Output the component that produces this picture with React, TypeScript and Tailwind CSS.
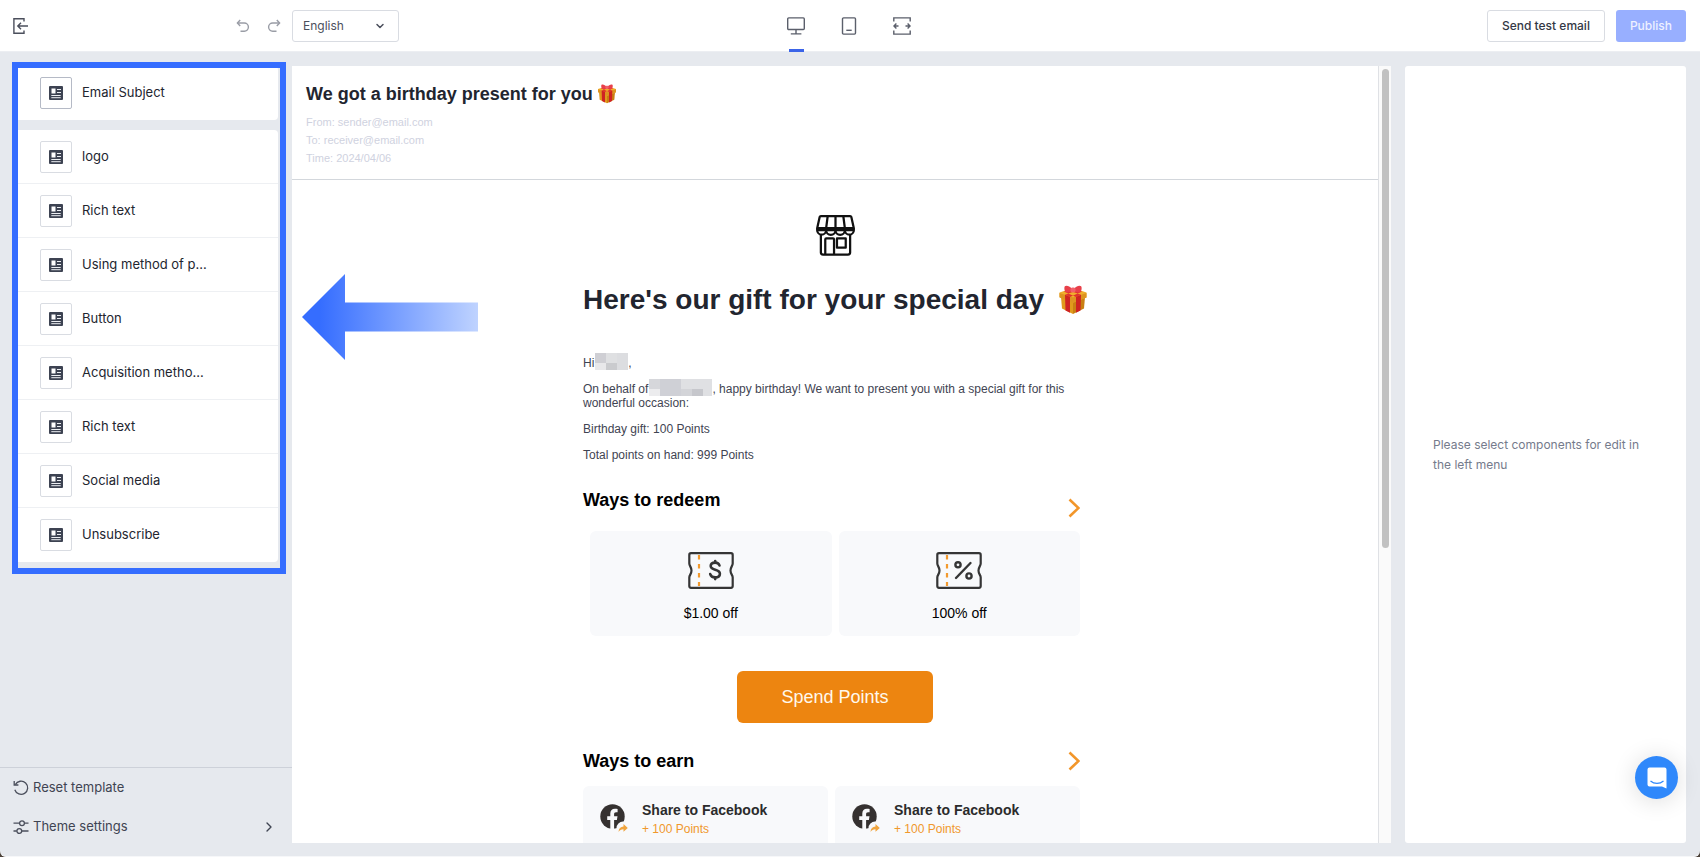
import React, { useState } from "react";
import { ChevronDown, ChevronRight } from "lucide-react";

const components = [
  "logo",
  "Rich text",
  "Using method of p...",
  "Button",
  "Acquisition metho...",
  "Rich text",
  "Social media",
  "Unsubscribe",
];

const BlockIcon = () => (
  <svg width="14" height="14" viewBox="0 0 14 14" fill="none" className="shrink-0">
    <rect width="14" height="14" rx="1" fill="#3d4352" />
    <rect x="2.5" y="2.5" width="4" height="5" fill="#fff" />
    <path d="M8 3.5h4M8 6.5h4M2.3 9.5h9.4M2.3 11.7h9.4" stroke="#eceef2" strokeWidth="1" />
  </svg>
);

const ExitIcon = () => (
  <svg width="16" height="16" viewBox="0 0 16 16" fill="none" stroke="#4b4f5c" strokeWidth="1.4">
    <path d="M11 3.5V.7H.9v14.6H11v-2.8" />
    <path d="M15 8H5M8 4.8 4.8 8 8 11.2" />
  </svg>
);

const UndoIcon = () => (
  <svg width="14" height="14" viewBox="0 0 14 14" fill="none" stroke="#9a9da6" strokeWidth="1.4">
    <path d="M1.5 4h6.8a4 4 0 0 1 0 8.2H4.5" />
    <path d="M4.2 1 1.4 4l2.8 3" />
  </svg>
);

const DesktopIcon = () => (
  <svg width="18" height="18" viewBox="0 0 18 18" fill="none" stroke="#5b5f6b" strokeWidth="1.4">
    <rect x=".7" y=".9" width="16.6" height="11.6" rx="1" />
    <path d="M9 12.5v4M3.8 16.9h10.6" />
  </svg>
);

const TabletIcon = () => (
  <svg width="18" height="18" viewBox="0 0 18 18" fill="none" stroke="#5b5f6b" strokeWidth="1.4">
    <rect x="2.5" y=".9" width="13" height="16.2" rx="1" />
    <path d="M6.3 13.3h5.4" />
  </svg>
);

const FullWidthIcon = () => (
  <svg width="18" height="18" viewBox="0 0 18 18" fill="none" stroke="#5b5f6b" strokeWidth="1.4">
    <path d="M.8 4.4V.9h16.4v3.5M.8 13.6v3.5h16.4v-3.5" />
    <path d="M5.5 9H1M3.4 6.6 1 9l2.4 2.4M12.5 9H17M14.6 6.6 17 9l-2.4 2.4" />
  </svg>
);

const ResetIcon = () => (
  <svg width="16" height="16" viewBox="0 0 16 16" fill="none" stroke="#4b4f5c" strokeWidth="1.3">
    <path d="M2.3 4.6a6.6 6.6 0 1 1-.5 5.2" />
    <path d="M1.2 1v4h4.2" />
  </svg>
);

const SlidersIcon = () => (
  <svg width="16" height="16" viewBox="0 0 16 16" fill="none" stroke="#4b4f5c" strokeWidth="1.3">
    <path d="M.5 4.2h6M11.5 4.2h4M.5 12h3.3M8.8 12h6.7" />
    <circle cx="9" cy="4.2" r="2.4" />
    <circle cx="6.3" cy="12" r="2.4" />
  </svg>
);

const StoreIcon = () => (
  <svg width="39" height="41" viewBox="0 0 40 42" fill="none" stroke="#111" strokeWidth="2.3" strokeLinejoin="round">
    <path d="M5 1.2h30q1 0 1.3 1L38.8 13.5H1.2L3.7 2.2Q4 1.2 5 1.2z" />
    <path d="M12 1l-1.6 12.5M20 1v12.5M28 1l1.6 12.5" />
    <path d="M1.2 13.5v2a4.6 4.6 0 0 0 9.2 0v-2M10.4 13.5v2a4.8 4.8 0 0 0 9.6 0v-2M20 13.5v2a4.8 4.8 0 0 0 9.6 0v-2M29.6 13.5v2a4.6 4.6 0 0 0 9.2 0v-2M1.2 15.6h37.6" />
    <path d="M5 20v18.5q0 2 2 2h26q2 0 2-2V20M9.5 40V25q0-1 1-1h7q1 0 1 1v15" />
    <rect x="21.5" y="24" width="9" height="9.5" />
  </svg>
);

const GiftIcon = ({ className }: { className: string }) => (
  <svg className={className} viewBox="0 0 28 30" role="img" aria-label="gift">
    <path d="M2 12l12 5v12L3 23.5z" fill="#e09a1c" />
    <path d="M26 12l-12 5v12l11-5.5z" fill="#c97f12" />
    <path d="M.5 7.5L14 3l13.5 4.5v5L14 17.5.5 12z" fill="#f0ae2c" />
    <path d="M.5 8v4.5L14 18v-5.5zM27.5 8v4.5L14 18v-5.5z" fill="#dd9420" />
    <path d="M6 9.8l5 2v16l-4.500-2.300zM22 9.800l-5 2v16l4.500-2.300z" fill="#cf2322" />
    <path d="M6 9.8L19 5l4 1.5L11 12zM22 9.8L9 5 5 6.5 17 12z" fill="#e0322c" />
    <path d="M14 5C11 .5 7 0 5.800 1.200c-1 1.600-.3 4.800 1 6C9 7.800 12 7 14 6zM14 5c3-4.500 7-5 8.200-3.800 1 1.600.3 4.800-1 6C19 7.800 16 7 14 6z" fill="#e8404a" />
    <rect x="11.5" y="2.5" width="5" height="5" rx="2" fill="#f2606a" />
  </svg>
);

const DollarMark = () => (
  <g stroke="#353535" strokeWidth="2.6" fill="none" strokeLinecap="round">
    <path d="M31.5 13.5c-.6-2-2.2-2.9-4.4-2.9-2.7 0-4.4 1.3-4.4 3.5 0 4.8 9.2 2.6 9.2 7.6 0 2.3-1.9 3.7-4.7 3.7-2.6 0-4.4-1.2-5-3.3" />
    <path d="M27.2 9v1.3M27.2 25.8v1.3" />
  </g>
);

const PercentMark = () => (
  <g stroke="#353535" strokeWidth="2.4" fill="none" strokeLinecap="round">
    <path d="M34.5 11L20 26" />
    <circle cx="22" cy="12.8" r="2.6" />
    <circle cx="33" cy="24" r="2.6" />
  </g>
);

const Ticket = ({ children }: { children: React.ReactNode }) => (
  <svg width="46" height="37" viewBox="0 0 46 37" fill="none">
    <path
      d="M3 1.2h40q1.7 0 1.7 1.7v8.6c0 2.5-2.2 3.5-2.2 7s2.2 4.5 2.2 7v8.6q0 1.7-1.7 1.7H3q-1.7 0-1.7-1.7v-8.6c0-2.5 2.2-3.5 2.2-7s-2.2-4.5-2.2-7V2.9Q1.3 1.2 3 1.2z"
      stroke="#353535"
      strokeWidth="2.2"
    />
    <path d="M11 3v31" stroke="#f39a2d" strokeWidth="2.2" strokeDasharray="4.5 4.5" />
    {children}
  </svg>
);

const FacebookShare = () => (
  <svg width="28" height="29" viewBox="0 0 28 29" fill="none">
    <circle cx="12.5" cy="12.5" r="12.2" fill="#353130" />
    <path d="M10.3 25v-9H7.2v-3.7h3.1V9.6c0-3.1 1.8-4.8 4.6-4.8.9 0 1.9.1 2.7.3v3.1h-1.5c-1.5 0-2 .9-2 1.900v2.200h3.400l-.6 3.700h-2.800v9z" fill="#f8f9fb" />
    <circle cx="23" cy="24" r="6.5" fill="#f8f9fb" />
    <path d="M18.5 28c.3-3.5 2-5.2 5-5.4V20l4.3 4-4.3 3.8v-2.5c-2.3 0-3.8.9-5 2.7z" fill="#f0a53f" />
  </svg>
);

// Pixelated stand-ins for personal data
const NameMask = () => (
  <svg className="-mt-[6px] -mb-[2px] ml-px inline-block align-middle" width="33" height="17" viewBox="0 0 32 18" preserveAspectRatio="none" shapeRendering="crispEdges">
    <rect width="32" height="18" fill="#dcdde0" />
    <path d="M0 0h11v11H0z" fill="#cfcfd4" />
    <path d="M11 0h10v11H11z" fill="#dfe0e2" />
    <path d="M0 11h11v7H0z" fill="#e8e8ea" />
    <path d="M11 11h10v7H11z" fill="#cacbce" />
  </svg>
);

const StoreMask = () => (
  <svg className="-mt-[6px] -mb-[2px] ml-px inline-block align-middle" width="63" height="17" viewBox="0 0 63 18" preserveAspectRatio="none" shapeRendering="crispEdges">
    <rect width="63" height="18" fill="#dfe0e3" />
    <path d="M0 0h11v11H0z" fill="#d6d7db" />
    <path d="M11 0h21v18H11z" fill="#cfd0d6" />
    <path d="M0 11h11v7H0z" fill="#ececee" />
    <path d="M32 11h11v7H32z" fill="#d3d4d8" />
    <path d="M43 11h11v7H43z" fill="#c6c7cc" />
  </svg>
);

const SectionArrow = () => (
  <svg width="12" height="20" viewBox="0 0 12 20" fill="none" stroke="#f2962a" strokeWidth="2.6">
    <path d="M1.5 1.5L10.500 10l-9 8.500" />
  </svg>
);

const ComponentRow = ({ label, active }: { label: string; active?: boolean }) => (
  <button className="flex h-[54px] w-full items-center gap-[10px] pl-[26px] text-left text-[#22252f]">
    <span className={`flex h-8 w-8 items-center justify-center rounded-xs border ${active ? "border-[#b5bac6]" : "border-[#d9dce2]"}`}>
      <BlockIcon />
    </span>
    {label}
  </button>
);

const Header = () => {
  const [language, setLanguage] = useState("English");

  return (
    <header className="grid h-[52px] shrink-0 grid-cols-3 items-center border-b border-[#eceef2] bg-white pl-[13px] pr-[14px] text-xs">
      <div className="flex items-center">
        <button aria-label="Exit" className="mr-[207px]"><ExitIcon /></button>
        <button aria-label="Undo" className="mr-[17px]"><UndoIcon /></button>
        <button aria-label="Redo" className="mr-[11px] -scale-x-100"><UndoIcon /></button>
        <label className="relative">
          <select
            aria-label="Language"
            value={language}
            onChange={(e) => setLanguage(e.target.value)}
            className="h-8 w-[107px] appearance-none rounded-[3px] border border-[#d9dce2] bg-white pl-[10px] text-[#4b4f5c]"
          >
            <option>English</option>
          </select>
          <ChevronDown size={12} strokeWidth={3} className="pointer-events-none absolute right-[13px] top-[10px] text-[#4b4f5c]" />
        </label>
      </div>
      <div className="flex h-full justify-center gap-[35px]">
        <button aria-label="Desktop" className="flex h-[52px] flex-col items-center justify-between pt-[17px]">
          <DesktopIcon />
          <span className="h-[3px] w-[15px] bg-[#3b64e8]" />
        </button>
        <button aria-label="Tablet"><TabletIcon /></button>
        <button aria-label="Full width"><FullWidthIcon /></button>
      </div>
      <div className="flex justify-end gap-[11px] font-medium">
        <button className="h-8 rounded-[3px] border border-[#d9dce2] px-[14px] text-[#343845]">Send test email</button>
        <button className="h-8 rounded-[3px] bg-[#98afff] px-[14px] text-[#eef1ff]">Publish</button>
      </div>
    </header>
  );
};

const Sidebar = () => (
  <aside className="flex w-[292px] shrink-0 flex-col justify-between">
    <div className="relative mx-[14px] mt-[14px]">
      <div className="rounded bg-white">
        <ComponentRow label="Email Subject" active />
      </div>
      <div className="mt-[10px] divide-y divide-[#eef0f3] rounded bg-white">
        {components.map((label, i) => (
          <ComponentRow key={i} label={label} />
        ))}
      </div>
      <div className="pointer-events-none absolute -bottom-3 -left-[2px] -right-2 -top-1 border-6 border-[#356dff]" />
    </div>
    <div className="border-t border-[#cdd1d9] pb-[10px] pl-[13px] pr-[15px] text-[#3f4452]">
      <button className="flex h-[39px] items-center gap-1">
        <ResetIcon />
        Reset template
      </button>
      <button className="flex h-[39px] w-full items-center gap-1">
        <SlidersIcon />
        Theme settings
        <ChevronRight size={16} className="ml-auto" />
      </button>
    </div>
  </aside>
);

const RedeemCard = ({ label, children }: { label: string; children: React.ReactNode }) => (
  <div className="flex h-[105px] flex-1 flex-col items-center rounded-md bg-[#f8f9fb] pt-[21px] text-sm text-black">
    <Ticket>{children}</Ticket>
    <span className="mt-[14px]">{label}</span>
  </div>
);

const EarnCard = () => (
  <div className="flex h-24 flex-1 gap-[14px] rounded-md bg-[#f8f9fb] pl-[17px] pt-[18px]">
    <FacebookShare />
    <div className="-mt-1">
      <p className="text-sm leading-5 font-bold text-[#2b2b2b]">Share to Facebook</p>
      <p className="text-xs leading-[18px] text-[#f0982c]">+ 100 Points</p>
    </div>
  </div>
);

const EmailPreview = () => (
  <main className="mb-[13px] mt-[14px] flex min-w-0 flex-1 overflow-hidden bg-white font-['Liberation_Sans',Arial,sans-serif]">
    <div className="flex-1 overflow-hidden">
      <div className="border-b border-[#d3d7dc] px-[14px] pb-3 pt-4">
        <h1 className="mb-[7px] flex items-center gap-1 text-lg leading-6 font-bold text-[#22252f]">
          We got a birthday present for you
          <GiftIcon className="h-5 w-5" />
        </h1>
        <div className="text-[11px] leading-[18px] text-[#cfd2e0]">
          <p>From: sender@email.com</p>
          <p>To: receiver@email.com</p>
          <p>Time: 2024/04/06</p>
        </div>
      </div>
      <div className="mx-auto w-[504px] pt-[35px]">
        <div className="flex justify-center"><StoreIcon /></div>
        <h2 className="mt-6 flex items-center justify-between whitespace-nowrap text-[28px] leading-10 font-bold text-[#22252f]">
          Here's our gift for your special day
          <GiftIcon className="h-[30px] w-7 shrink-0" />
        </h2>
        <div className="mt-9 space-y-3 text-xs leading-[14px] text-[#3f4452]">
          <p>Hi<NameMask />,</p>
          <p>On behalf of<StoreMask />, happy birthday! We want to present you with a special gift for this wonderful occasion:</p>
          <p>Birthday gift: 100 Points</p>
          <p>Total points on hand: 999 Points</p>
        </div>
        <div className="pr-[7px]">
          <div className="mt-[26px] flex items-start justify-between">
            <h3 className="text-lg leading-6 font-bold text-black">Ways to redeem</h3>
            <a href="#redeem" aria-label="Ways to redeem" className="mt-[10px]"><SectionArrow /></a>
          </div>
          <div className="mt-[13px] flex gap-[7px] pl-[7px]">
            <RedeemCard label="$1.00 off"><DollarMark /></RedeemCard>
            <RedeemCard label="100% off"><PercentMark /></RedeemCard>
          </div>
        </div>
        <div className="mt-[35px] flex justify-center">
          <button className="h-[52px] w-[196px] rounded-md bg-[#ed8510] text-lg text-[#fff8ec]">Spend Points</button>
        </div>
        <div className="pr-[7px]">
          <div className="mt-[26px] flex items-center justify-between">
            <h3 className="text-lg leading-6 font-bold text-black">Ways to earn</h3>
            <a href="#earn" aria-label="Ways to earn"><SectionArrow /></a>
          </div>
          <div className="mt-[13px] flex gap-[7px]">
            <EarnCard />
            <EarnCard />
          </div>
        </div>
      </div>
    </div>
    <div className="w-[13px] border-l border-[#dfe1e5] bg-[#fafafa] pl-[3px] pt-[3px]">
      <div className="h-[479px] w-[7px] rounded-full bg-[#c1c1c1]" />
    </div>
  </main>
);

const ChatIcon = () => (
  <svg width="20" height="22" viewBox="0 0 20 22" fill="none">
    <path d="M2.5.5h15q2 0 2 2V21.5L15 19.500H2.500q-2 0-2-2v-15q0-2 2-2z" fill="#fff" />
    <path d="M3.5 14c3.8 3.2 9.2 3.2 13 0" stroke="#2f88fb" strokeWidth="1.2" />
  </svg>
);

const App: React.FC = () => {
  return (
    <div className="h-screen bg-[#4a4038] font-['Inter',sans-serif] text-[13px]">
      <div className="relative flex h-full flex-col overflow-hidden rounded-b-md border-b border-[#f6f7f9] bg-[#e6e9ee]">
        <Header />
        <div className="flex min-h-0 flex-1">
          <Sidebar />
          <EmailPreview />
          <section className="mx-[14px] mb-[13px] mt-[14px] flex w-[281px] shrink-0 items-center rounded-[3px] bg-white pl-7 pr-9 text-xs leading-5 text-[#757b8c]">
            <p>Please select components for edit in the left menu</p>
          </section>
        </div>
        <svg className="pointer-events-none absolute left-[302px] top-[274px]" width="176" height="86" viewBox="0 0 176 86">
          <defs>
            <linearGradient id="arrow" x1="0" x2="1" y1="0" y2="0">
              <stop offset="0.1" stopColor="#356dff" />
              <stop offset="1" stopColor="#bfd3ff" />
            </linearGradient>
          </defs>
          <path d="M0 43L43 0v28.500h133v29H43V86z" fill="url(#arrow)" />
        </svg>
        <button aria-label="Open chat" className="absolute bottom-[57px] right-[22px] flex h-[43px] w-[43px] items-center justify-center rounded-full bg-[#2f88fb] shadow-[0_2px_24px_rgba(0,0,0,0.14)]">
          <ChatIcon />
        </button>
      </div>
    </div>
  );
};

export default App;
